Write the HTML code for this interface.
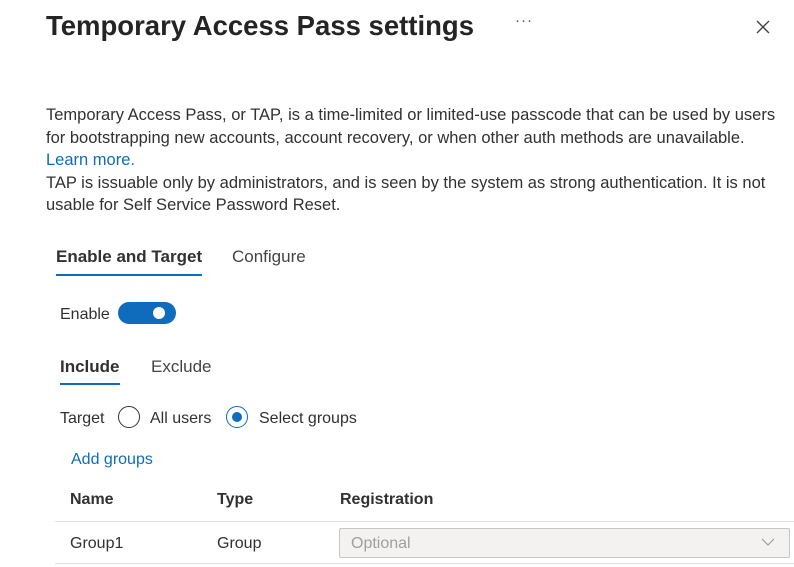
<!DOCTYPE html>
<html><head><meta charset="utf-8"><style>
body{margin:0;width:794px;height:567px;background:#fff;font-family:"Segoe UI","Liberation Sans",sans-serif;color:#323130;position:relative;overflow:hidden}
.a{position:absolute;white-space:nowrap}
p{margin:0}
</style></head><body>
<div class="a" style="left:46px;top:10px;font-size:27.5px;font-weight:bold;color:#252423">Temporary Access Pass settings</div>
<div class="a" style="left:515px;top:12px;font-size:15px;color:#555;letter-spacing:1px">···</div>
<svg class="a" style="left:755px;top:19px" width="16" height="16"><path d="M2 2L14 14M14 2L2 14" stroke="#444" stroke-width="1.4"/></svg>
<div class="a" style="left:46px;top:104px;font-size:16.5px;line-height:22.5px;color:#323130">
<p>Temporary Access Pass, or TAP, is a time-limited or limited-use passcode that can be used by users</p>
<p>for bootstrapping new accounts, account recovery, or when other auth methods are unavailable.</p>
<p style="color:#0f6cbd">Learn more.</p>
<p>TAP is issuable only by administrators, and is seen by the system as strong authentication. It is not</p>
<p>usable for Self Service Password Reset.</p>
</div>
<div class="a" style="left:56px;top:247px;font-size:17px;font-weight:bold;color:#323130">Enable and Target</div>
<div class="a" style="left:56px;top:274px;width:146px;height:2px;background:#0f6cbd"></div>
<div class="a" style="left:232px;top:247px;font-size:17px;color:#444">Configure</div>
<div class="a" style="left:60px;top:306px;font-size:16px">Enable</div>
<div class="a" style="left:118px;top:302px;width:58px;height:22px;border-radius:11px;background:#0f6cbd"></div>
<div class="a" style="left:153px;top:307px;width:12px;height:12px;border-radius:6px;background:#fff"></div>
<div class="a" style="left:60px;top:357px;font-size:17px;font-weight:bold">Include</div>
<div class="a" style="left:60px;top:383px;width:60px;height:2px;background:#0f6cbd"></div>
<div class="a" style="left:151px;top:357px;font-size:17px;color:#444">Exclude</div>
<div class="a" style="left:60px;top:410px;font-size:16px">Target</div>
<div class="a" style="left:118px;top:406px;width:20px;height:20px;border:1.5px solid #333;border-radius:50%"></div>
<div class="a" style="left:150px;top:410px;font-size:16px">All users</div>
<div class="a" style="left:226px;top:406px;width:20px;height:20px;border:1.5px solid #0f6cbd;border-radius:50%"></div>
<div class="a" style="left:232px;top:412px;width:10px;height:10px;background:#0f6cbd;border-radius:50%"></div>
<div class="a" style="left:259px;top:410px;font-size:16px">Select groups</div>
<div class="a" style="left:71px;top:451px;font-size:16px;color:#0f6cbd">Add groups</div>
<div class="a" style="left:70px;top:491px;font-size:16px;font-weight:bold">Name</div>
<div class="a" style="left:217px;top:491px;font-size:16px;font-weight:bold">Type</div>
<div class="a" style="left:340px;top:491px;font-size:16px;font-weight:bold">Registration</div>
<div class="a" style="left:55px;top:521px;width:739px;height:1px;background:#e1dfdd"></div>
<div class="a" style="left:70px;top:535px;font-size:16px">Group1</div>
<div class="a" style="left:217px;top:535px;font-size:16px">Group</div>
<div class="a" style="left:339px;top:528px;width:449px;height:28px;border:1px solid #c8c6c4;border-radius:2px;background:#f3f2f1"></div>
<div class="a" style="left:351px;top:535px;font-size:16px;color:#a19f9d">Optional</div>
<svg class="a" style="left:761px;top:537px" width="14" height="10"><path d="M1 2L7 8L13 2" stroke="#a19f9d" stroke-width="1.2" fill="none"/></svg>
<div class="a" style="left:55px;top:563px;width:739px;height:1px;background:#e1dfdd"></div>
</body></html>
